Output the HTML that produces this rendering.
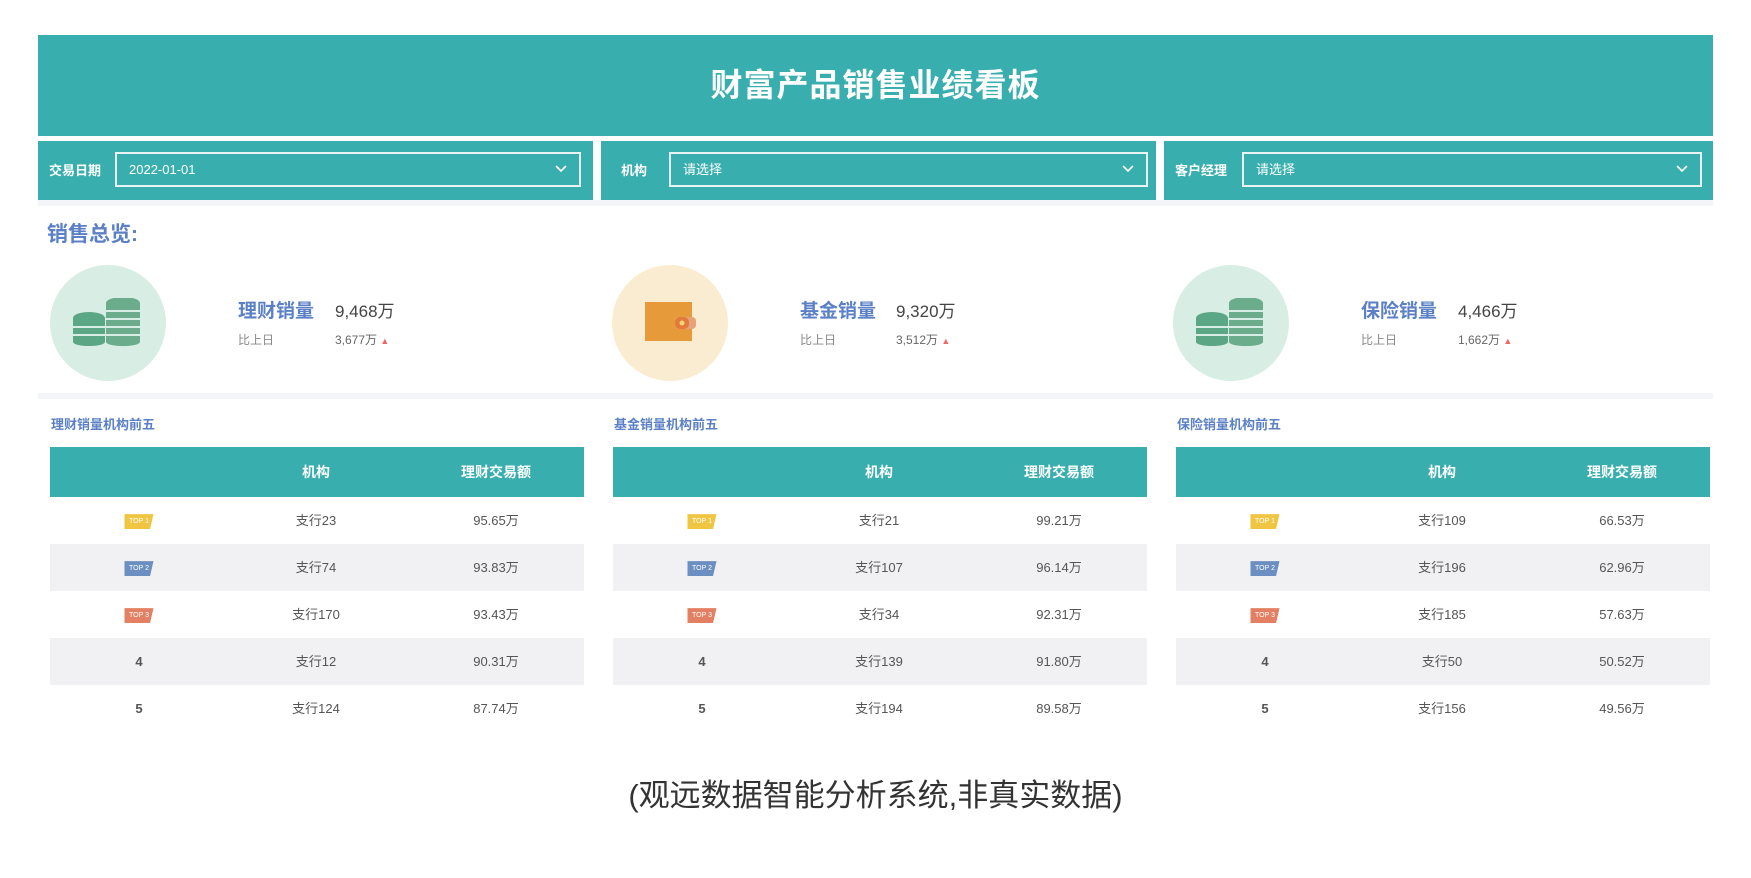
<!DOCTYPE html>
<html><head><meta charset="utf-8">
<style>
*{margin:0;padding:0;box-sizing:border-box}
body{width:1751px;height:878px;background:#fff;position:relative;font-family:"Liberation Sans","Noto Sans CJK SC",sans-serif;overflow:hidden}
.abs{position:absolute}
.hdr{left:38px;top:35px;width:1675px;height:101px;background:#38afae;color:#fff;font-size:32px;font-weight:bold;text-align:center;line-height:101px;letter-spacing:1px}
.panel{top:141px;height:59px;width:555px;background:#38afae}
.lbl{position:absolute;left:11px;top:0;line-height:59px;color:#fff;font-size:13px;font-weight:bold}
.sel{position:absolute;top:11px;height:35px;border:2px solid #e9f5f5;color:#fff;font-size:13px;line-height:31px;padding-left:12px}
.sel svg{position:absolute;right:12px;top:11px}
.strip{left:38px;width:1675px;background:#f3f5f9}
.blue{color:#5b80c6;font-weight:bold}
.circle{width:116px;height:116px;border-radius:50%}
.name{font-size:19px}
.val{font-size:17px;color:#444}
.sub{font-size:12px;color:#888}
.tbl{top:447px;width:534px}
.th{height:50px;background:#38afae;color:#fff;font-weight:bold;font-size:14px;position:relative}
.row{height:47px;position:relative;font-size:13px;color:#555}
.row.g{background:#f1f1f3}
.c{position:absolute;top:0;transform:translateX(-50%);line-height:47px;white-space:nowrap}
.th .c{line-height:50px}
.tag{display:inline-block;width:29px;height:15px;font-size:7px;color:#fff;line-height:15px;text-align:center;clip-path:polygon(0 0,100% 0,88% 100%,0 100%);vertical-align:middle}
.sec{font-size:13px;top:414px}
</style></head><body>
<div class="abs hdr">财富产品销售业绩看板</div>

<div class="abs panel" style="left:38px"><div class="lbl">交易日期</div><div class="sel" style="left:77px;width:466px">2022-01-01<svg width="12" height="8" viewBox="0 0 12 8"><path d="M1 1l5 5 5-5" stroke="#fff" stroke-width="1.6" fill="none"/></svg></div></div>
<div class="abs panel" style="left:601px"><div class="lbl" style="left:20px">机构</div><div class="sel" style="left:68px;width:479px">请选择<svg width="12" height="8" viewBox="0 0 12 8"><path d="M1 1l5 5 5-5" stroke="#fff" stroke-width="1.6" fill="none"/></svg></div></div>
<div class="abs panel" style="left:1164px;width:549px"><div class="lbl" style="left:11px">客户经理</div><div class="sel" style="left:78px;width:460px">请选择<svg width="12" height="8" viewBox="0 0 12 8"><path d="M1 1l5 5 5-5" stroke="#fff" stroke-width="1.6" fill="none"/></svg></div></div>
<div class="abs strip" style="top:200px;height:6px"></div>

<div class="abs blue" style="left:47px;top:218px;font-size:21px">销售总览:</div>

<!-- card 1 -->
<div class="abs circle" style="left:50px;top:265px;background:#d8ede4"></div>
<svg class="abs" style="left:73px;top:298px" width="70" height="48" viewBox="0 0 70 48">
<g fill="#5ba785"><ellipse cx="16" cy="20" rx="16" ry="6"/><rect x="0" y="20" width="32" height="24"/><ellipse cx="16" cy="44" rx="16" ry="4"/></g>
<g fill="#6aac8c"><ellipse cx="50" cy="5" rx="17" ry="6"/><rect x="33" y="5" width="34" height="39"/><ellipse cx="50" cy="44" rx="17" ry="4"/></g>
<g stroke="#d8ede4" stroke-width="2" fill="none"><path d="M0 29h32M0 37h32M33 13h34M33 21h34M33 29h34M33 37h34"/></g>
</svg>
<div class="abs blue name" style="left:238px;top:296px">理财销量</div>
<div class="abs val" style="left:335px;top:297px">9,468万</div>
<div class="abs sub" style="left:238px;top:331px">比上日</div>
<div class="abs sub" style="left:335px;top:331px;color:#666">3,677万 <span style="color:#e66;font-size:9px">▲</span></div>

<!-- card 2 -->
<div class="abs circle" style="left:612px;top:265px;background:#f9ecd1"></div>
<svg class="abs" style="left:645px;top:302px" width="60" height="42" viewBox="0 0 60 42">
<rect x="0" y="0" width="47" height="39" fill="#e69a3a"/>
<rect x="30" y="15" width="21" height="12" rx="4" fill="#e8a179"/>
<rect x="30" y="15" width="14" height="12" rx="5" fill="#e27a3a"/>
<circle cx="37" cy="21" r="2.5" fill="#f4d37a"/>
</svg>
<div class="abs blue name" style="left:800px;top:296px">基金销量</div>
<div class="abs val" style="left:896px;top:297px">9,320万</div>
<div class="abs sub" style="left:800px;top:331px">比上日</div>
<div class="abs sub" style="left:896px;top:331px;color:#666">3,512万 <span style="color:#e66;font-size:9px">▲</span></div>

<!-- card 3 -->
<div class="abs circle" style="left:1173px;top:265px;background:#d8ede4"></div>
<svg class="abs" style="left:1196px;top:298px" width="70" height="48" viewBox="0 0 70 48">
<g fill="#5ba785"><ellipse cx="16" cy="20" rx="16" ry="6"/><rect x="0" y="20" width="32" height="24"/><ellipse cx="16" cy="44" rx="16" ry="4"/></g>
<g fill="#6aac8c"><ellipse cx="50" cy="5" rx="17" ry="6"/><rect x="33" y="5" width="34" height="39"/><ellipse cx="50" cy="44" rx="17" ry="4"/></g>
<g stroke="#d8ede4" stroke-width="2" fill="none"><path d="M0 29h32M0 37h32M33 13h34M33 21h34M33 29h34M33 37h34"/></g>
</svg>
<div class="abs blue name" style="left:1361px;top:296px">保险销量</div>
<div class="abs val" style="left:1458px;top:297px">4,466万</div>
<div class="abs sub" style="left:1361px;top:331px">比上日</div>
<div class="abs sub" style="left:1458px;top:331px;color:#666">1,662万 <span style="color:#e66;font-size:9px">▲</span></div>

<div class="abs strip" style="top:393px;height:6px"></div>

<div class="abs blue sec" style="left:51px">理财销量机构前五</div>
<div class="abs blue sec" style="left:614px">基金销量机构前五</div>
<div class="abs blue sec" style="left:1177px">保险销量机构前五</div>

<div class="abs tbl" style="left:50px">
<div class="th"><span class="c" style="left:266px">机构</span><span class="c" style="left:446px">理财交易额</span></div>
<div class="row"><span class="c" style="left:89px"><span class="tag" style="background:#f0c542">TOP 1</span></span><span class="c" style="left:266px">支行23</span><span class="c" style="left:446px">95.65万</span></div>
<div class="row g"><span class="c" style="left:89px"><span class="tag" style="background:#6b8fc0">TOP 2</span></span><span class="c" style="left:266px">支行74</span><span class="c" style="left:446px">93.83万</span></div>
<div class="row"><span class="c" style="left:89px"><span class="tag" style="background:#e38063">TOP 3</span></span><span class="c" style="left:266px">支行170</span><span class="c" style="left:446px">93.43万</span></div>
<div class="row g"><span class="c" style="left:89px;font-weight:bold">4</span><span class="c" style="left:266px">支行12</span><span class="c" style="left:446px">90.31万</span></div>
<div class="row"><span class="c" style="left:89px;font-weight:bold">5</span><span class="c" style="left:266px">支行124</span><span class="c" style="left:446px">87.74万</span></div>
</div>

<div class="abs tbl" style="left:613px">
<div class="th"><span class="c" style="left:266px">机构</span><span class="c" style="left:446px">理财交易额</span></div>
<div class="row"><span class="c" style="left:89px"><span class="tag" style="background:#f0c542">TOP 1</span></span><span class="c" style="left:266px">支行21</span><span class="c" style="left:446px">99.21万</span></div>
<div class="row g"><span class="c" style="left:89px"><span class="tag" style="background:#6b8fc0">TOP 2</span></span><span class="c" style="left:266px">支行107</span><span class="c" style="left:446px">96.14万</span></div>
<div class="row"><span class="c" style="left:89px"><span class="tag" style="background:#e38063">TOP 3</span></span><span class="c" style="left:266px">支行34</span><span class="c" style="left:446px">92.31万</span></div>
<div class="row g"><span class="c" style="left:89px;font-weight:bold">4</span><span class="c" style="left:266px">支行139</span><span class="c" style="left:446px">91.80万</span></div>
<div class="row"><span class="c" style="left:89px;font-weight:bold">5</span><span class="c" style="left:266px">支行194</span><span class="c" style="left:446px">89.58万</span></div>
</div>

<div class="abs tbl" style="left:1176px">
<div class="th"><span class="c" style="left:266px">机构</span><span class="c" style="left:446px">理财交易额</span></div>
<div class="row"><span class="c" style="left:89px"><span class="tag" style="background:#f0c542">TOP 1</span></span><span class="c" style="left:266px">支行109</span><span class="c" style="left:446px">66.53万</span></div>
<div class="row g"><span class="c" style="left:89px"><span class="tag" style="background:#6b8fc0">TOP 2</span></span><span class="c" style="left:266px">支行196</span><span class="c" style="left:446px">62.96万</span></div>
<div class="row"><span class="c" style="left:89px"><span class="tag" style="background:#e38063">TOP 3</span></span><span class="c" style="left:266px">支行185</span><span class="c" style="left:446px">57.63万</span></div>
<div class="row g"><span class="c" style="left:89px;font-weight:bold">4</span><span class="c" style="left:266px">支行50</span><span class="c" style="left:446px">50.52万</span></div>
<div class="row"><span class="c" style="left:89px;font-weight:bold">5</span><span class="c" style="left:266px">支行156</span><span class="c" style="left:446px">49.56万</span></div>
</div>

<div class="abs" style="left:0;width:1751px;top:770px;text-align:center;font-size:31px;color:#333">(观远数据智能分析系统,非真实数据)</div>
</body></html>
